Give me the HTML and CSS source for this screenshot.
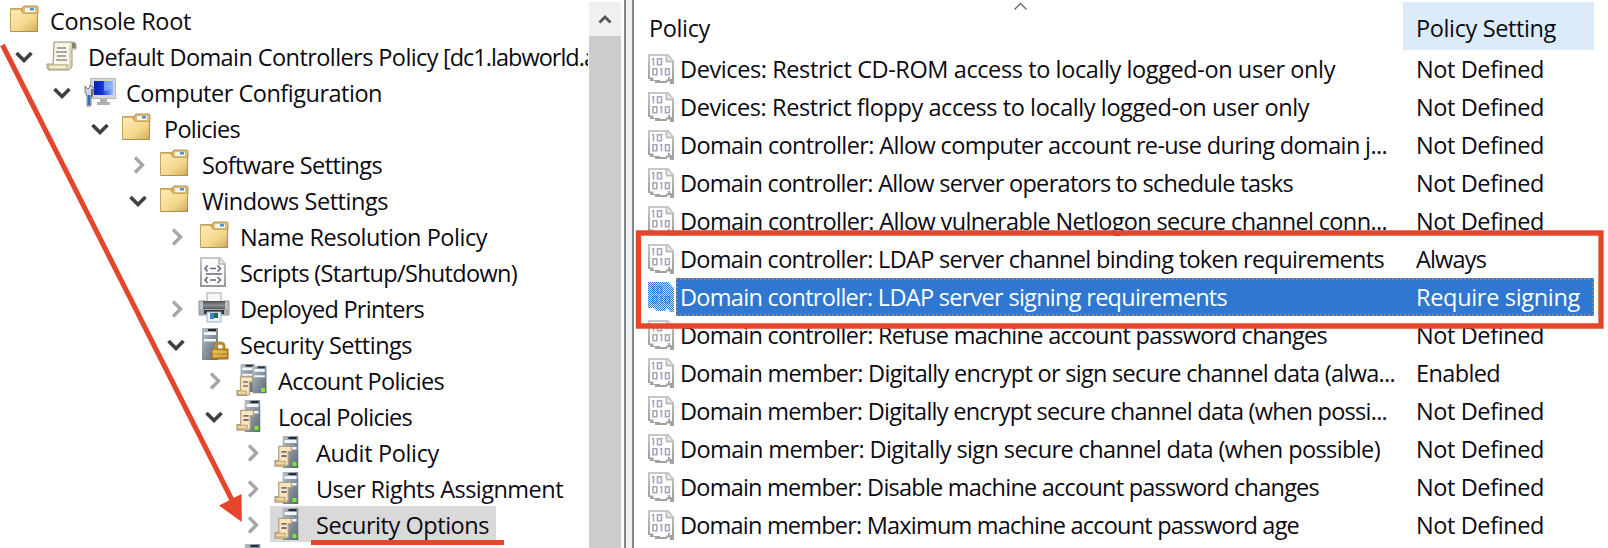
FILE: index.html
```
<!DOCTYPE html>
<html lang="en">
<head>
<meta charset="utf-8">
<title>Group Policy Management Editor</title>
<link rel="stylesheet" href="styles.css">
</head>
<body>
<svg width="0" height="0" class="defs">
  <defs>
    <linearGradient id="gFolder" x1="0" y1="0" x2="1" y2="1"><stop offset="0" stop-color="#fdeab5"/><stop offset=".6" stop-color="#f3d78c"/><stop offset="1" stop-color="#cfa95a"/></linearGradient>
    <linearGradient id="gServer" x1="0" y1="0" x2="1" y2="1"><stop offset="0" stop-color="#b4bec7"/><stop offset=".5" stop-color="#8593a0"/><stop offset="1" stop-color="#5d686b"/></linearGradient>
    <linearGradient id="gGold" x1="0" y1="0" x2="1" y2="1"><stop offset="0" stop-color="#e9bc50"/><stop offset="1" stop-color="#a8731a"/></linearGradient>
    <linearGradient id="gScreen" x1="0" y1="0" x2="1" y2="0"><stop offset="0" stop-color="#0a22a8"/><stop offset=".45" stop-color="#1237e0"/><stop offset="1" stop-color="#8fb7ff"/></linearGradient>
    <linearGradient id="gPrint" x1="0" y1="0" x2="0" y2="1"><stop offset="0" stop-color="#4c4f52"/><stop offset=".5" stop-color="#8b8f93"/><stop offset="1" stop-color="#44474a"/></linearGradient>
    <linearGradient id="gDoc" x1="0" y1="0" x2="0" y2="1"><stop offset="0" stop-color="#c8c8c8"/><stop offset="1" stop-color="#989898"/></linearGradient>
    <pattern id="dither" width="2" height="2" patternUnits="userSpaceOnUse"><path fill="#2f77d1" d="M0 0h1v1H0zM1 1h1v1H1z"/></pattern>
  </defs>
  <symbol id="folder" viewBox="0 0 32 32">
    <path d="M.5 4.500h13v4h14v19h-27z" fill="#d9b56a" stroke="#c4a15c"/>
    <path d="M12 8V4l2-2h13l1 1v7H12z" fill="#dcbc78" stroke="#b99653"/>
    <path d="M15 4h10v4H15z" fill="#fbf6e4"/><path d="M20 4h4v2.500h-4z" fill="#4d93dc"/>
    <path d="M1 6h9l3 4h14.500v17.500H1z" fill="url(#gFolder)"/>
    <path d="M1 27.500h27M27.500 10v17" stroke="#b18f48" fill="none"/>
  </symbol>
  <symbol id="scroll" viewBox="0 0 32 32">
    <path d="M8 2h20l2 2v5h-4v18l-3 3H3l-2-2v-4h6z" fill="#ded7bd" stroke="#9c9883"/>
    <path d="M9 3h15l-1 6v15H8z" fill="#fbf7e6"/>
    <path d="M26 3h3l1 5h-4z" fill="#8d836a"/>
    <path d="M2 25h19v4H3z" fill="#f5edcf" stroke="#b4aa82"/>
    <path d="M11 8h9M10 12h11M11 16h9M10 20h11" stroke="#8d8d92" stroke-width="1.500"/>
  </symbol>
  <symbol id="computer" viewBox="0 0 32 32">
    <path d="M6.500 2.500h25v20h-25z" fill="#d7d7d2" stroke="#b8b8b4"/>
    <path d="M10 5h19v14H10z" fill="url(#gScreen)"/>
    <path d="M20 5h9v8l-9 2z" fill="#8eb5ff" opacity=".75"/>
    <path d="M16 23h7v3h3v3H13v-3h3z" fill="#aeb0b0"/>
    <path d="M1 10l3 3 2-2V9l4 3-1 6-2 2v10H3V20l-2-4z" fill="#cfd3d6" stroke="#747b82"/>
    <path d="M5 19v10" stroke="#2e6fb5" stroke-width="2.500"/>
    <path d="M8 13v8" stroke="#555" stroke-width="1.500"/>
  </symbol>
  <symbol id="script" viewBox="0 0 32 32">
    <path d="M3 2h19l5 6v22H3z" fill="#fafafa" stroke="url(#gDoc)" stroke-width="2"/>
    <path d="M21 2v6h6" fill="#e4e4e4" stroke="#b5b5b5" stroke-width="1.500"/>
    <path d="M9.500 9.500L7 12.500l2.500 3M19.500 9.500l3 3-3 3M12 12.500h6M8 18h16M9.500 21L7 24l2.500 3M19.500 21l3 3-3 3M12 24h6" fill="none" stroke="#696580" stroke-width="1.600"/>
  </symbol>
  <symbol id="printer" viewBox="0 0 32 32">
    <path d="M9 1h14v10H9z" fill="#f7f7f7" stroke="#c3c3c3" stroke-width="1.500"/>
    <path d="M1 9h6v2h18V9h6v14H1z" fill="#bfc4c8" stroke="#8c9195"/>
    <path d="M5 9h22v9H5z" fill="url(#gPrint)"/>
    <path d="M1 17h30v6H1z" fill="#a4aaae"/><path d="M6 18h20v4H6z" fill="#33383d"/>
    <path d="M9 20h14v10H9z" fill="#e9f3fa" stroke="#9cb1c6"/>
    <path d="M12 21h4v6h-4z" fill="#3d86c4"/><path d="M16 21h4v5h-4z" fill="#21695c"/>
  </symbol>
  <symbol id="tower" viewBox="0 0 16 32">
    <path d="M0 0h16v32H0z" fill="url(#gServer)"/>
    <path d="M2 4h12v3H2zM2 11h12v2.500H2z" fill="#f2f6f8"/>
    <path d="M6 1h8v2H6z" fill="#222b34"/>
  </symbol>
  <symbol id="security" viewBox="0 0 32 32">
    <use href="#tower" x="4" y="0" width="16" height="32"/>
    <path d="M18 23v-5q0-3 4-3t4 3v5" fill="none" stroke="#b98b30" stroke-width="3"/>
    <path d="M14 21h16v10H14z" fill="url(#gGold)" stroke="#98691b"/>
    <path d="M15 24h14M15 28h14" stroke="#f2ce72"/>
  </symbol>
  <symbol id="paper" viewBox="0 0 18 20">
    <path d="M4.500 .8h12v5h-3v12.500l-2 1.200H1v-5h3.500z" fill="#f9e6bd" stroke="#b39f82" stroke-width="1.200"/>
    <path d="M1.500 15h9v3.500h-9z" fill="#f0d6a1" stroke="#b79e72"/>
    <path d="M7 6h5M7 10h5" stroke="#777184" stroke-width="1.700"/>
  </symbol>
  <symbol id="account" viewBox="0 0 32 32">
    <use href="#tower" x="4" y="0" width="15" height="28"/>
    <use href="#tower" x="16" y="1.500" width="15" height="28"/>
    <path d="M25 24h4v4h-4z" fill="#78ed2e"/>
    <use href="#paper" x="0" y="12" width="18" height="20"/>
  </symbol>
  <symbol id="policy" viewBox="0 0 32 32">
    <use href="#tower" x="8.500" y="0" width="16" height="32"/>
    <path d="M18.500 26h4v4h-4z" fill="#78ed2e"/>
    <use href="#paper" x="0" y="9" width="19" height="22"/>
  </symbol>
  <symbol id="digits" viewBox="0 0 26 30">
    <path d="M5.500 4v7.500M4 5h1.500M13.500 14v7.500M12 15h1.500M9.500 4.800h4v6h-4zM5 14.800h3.800v6H5zM17.500 14.800h3.800v6h-3.800z" fill="none" stroke-width="1.600"/>
  </symbol>
  <symbol id="binary" viewBox="0 0 26 30">
    <path d="M1 1h19l5 6v21H1z" fill="#fff"/>
    <path d="M1 25V1h19l5 6v22" fill="none" stroke="url(#gDoc)" stroke-width="2"/>
    <path d="M0 23.500h5.500V26H12v1h6v-1.500h2V23h2v2h4v5h-4v-2.500h-3V29H7v-2H2v-2H0z" fill="#a3a3a3"/>
    <path d="M18.500 1v6.500H25" fill="#eee" stroke="#bdbdbd" stroke-width="1.800"/>
    <use href="#digits" stroke="#a9a6ba" width="26" height="30"/>
  </symbol>
  <symbol id="ditherdoc" viewBox="0 0 26 30">
    <path d="M0 0h20l6 6v24h-4l-3-4-2 3H9l-3-3H0z" fill="#cfdcea"/>
    <use href="#digits" stroke="#8a94b8" width="26" height="30"/>
    <path d="M0 0h20l6 6v24h-4l-3-4-2 3H9l-3-3H0z" fill="url(#dither)"/>
  </symbol>
</svg>
<div class="editor">
  <nav class="tree" id="tree"></nav>
  <div class="scrollbar"><div class="scroll-up"><svg width="14" height="10" viewBox="0 0 14 10"><path d="M1.500 8.500L7 3l5.500 5.500" fill="none" stroke="#555" stroke-width="2.800"/></svg></div></div>
  <div class="splitter"></div>
  <main class="list">
    <div class="head"><div class="head-name"><span data-w="59">Policy</span></div><div class="head-setting"><span data-w="138">Policy Setting</span></div></div>
    <div id="rows"></div>
  </main>
  <svg class="marks" width="1608" height="548">
    <path d="M1014.500 9.500l6-6 6 6" fill="none" stroke="#666" stroke-width="1.300"/>
    <path d="M2.500 45L232 500" stroke="#e5452b" stroke-width="5"/>
    <path d="M219 505.500l22.500-11.500.3 28z" fill="#e5452b"/>
    <path d="M311 542.500h193" stroke="#e5452b" stroke-width="5"/>
    <path d="M638.500 233h962.500v93H638.500z" fill="none" stroke="#e5452b" stroke-width="5.300"/>
  </svg>
</div>
<script src="app.js"></script>
</body>
</html>
```
FILE: styles.css
```
body { margin: 0; background: #fff; }
.defs { position: absolute; }
.editor {
  position: relative;
  display: flex;
  width: 1608px;
  height: 548px;
  overflow: hidden;
  background: #fff;
  color: #0c0a12;
  font: 23.5px/36px "Open Sans", "Noto Sans", sans-serif;
  white-space: nowrap;
}
.tree { width: 588px; padding-top: 2px; overflow: hidden; box-sizing: border-box; flex: none; }
.node { display: flex; height: 36px; }
.depth0 { padding-left: 8px; }
.depth1 { padding-left: 8px; }
.depth2 { padding-left: 46px; }
.depth3 { padding-left: 84px; }
.depth4 { padding-left: 122px; }
.depth5 { padding-left: 160px; }
.depth6 { padding-left: 198px; }
.depth7 { padding-left: 236px; }
.twisty { width: 38px; flex: none; display: flex; align-items: center; }
.twisty svg { margin: 1px 0 0 7px; }
.depth0 .twisty { display: none; }
.item { display: flex; height: 36px; flex: none; }
.item > svg { width: 32px; height: 32px; margin: 2px 0 0; flex: none; }
.item > .shift { margin-left: 2px; margin-right: -2px; }
.label { display: flex; margin-left: 10px; padding-top: 1px; height: 35px; }
.label span + span { margin-left: 5px; }
.selected { background: #d9d9d9; margin-left: -4px; padding-left: 4px; padding-right: 7px; }
.scrollbar { width: 32px; margin: 2px 3px 0 1px; background: #cdcdcd; flex: none; }
.scroll-up { height: 34px; background: #f0f0f0; display: flex; align-items: center; justify-content: center; }
.splitter { width: 6px; border: solid #828790; border-width: 0 2px; background: #f0f0f0; flex: none; }
.list { flex: 1; min-width: 0; }
.head { display: flex; height: 50px; }
.head-name { width: 754px; padding: 10px 0 0 15px; flex: none; box-sizing: content-box; }
.head-setting { width: 178px; height: 38px; margin-top: 2px; padding: 8px 0 2px 13px; background: #dcebf8; }
.row { display: flex; height: 38px; padding-left: 14px; }
.row > svg { width: 26px; height: 30px; margin-top: 4px; flex: none; }
.cells { display: flex; margin-left: 2px; width: 918px; box-sizing: border-box; padding: 1px 0 0 4px; height: 38px; flex: none; }
.name { width: 736px; flex: none; }
.picked .cells { background: #2f77d1; color: #fff; outline: 2px dotted #8d8187; outline-offset: -2px; }
.marks { position: absolute; left: 0; top: 0; }
```
FILE: app.js
```
const nodes = [
  [0, '', 'folder', 'Console Root', 139],
  [1, 'open', 'scroll', 'Default Domain Controllers Policy', 348, '[dc1.labworld.a', 151],
  [2, 'open', 'computer', 'Computer Configuration', 254],
  [3, 'open', 'folder', 'Policies', 74],
  [4, 'closed', 'folder', 'Software Settings', 178],
  [4, 'open', 'folder', 'Windows Settings', 184],
  [5, 'closed', 'folder', 'Name Resolution Policy', 245],
  [5, '', 'script', 'Scripts (Startup/Shutdown)', 275],
  [5, 'closed', 'printer', 'Deployed Printers', 182],
  [5, 'open', 'security', 'Security Settings', 170],
  [6, 'closed', 'account', 'Account Policies', 164],
  [6, 'open', 'policy', 'Local Policies', 132],
  [7, 'closed', 'policy', 'Audit Policy', 121],
  [7, 'closed', 'policy', 'User Rights Assignment', 245],
  [7, 'closed', 'policy', 'Security Options', 171],
  [6, '', 'policy', '', 0]
];
const settings = { 'Not Defined': 126, 'Always': 68, 'Require signing': 162, 'Enabled': 82 };
const rows = [
  ['Devices: Restrict CD-ROM access to locally logged-on user only', 653, 'Not Defined'],
  ['Devices: Restrict floppy access to locally logged-on user only', 627, 'Not Defined'],
  ['Domain controller: Allow computer account re-use during domain j...', 705, 'Not Defined'],
  ['Domain controller: Allow server operators to schedule tasks', 611, 'Not Defined'],
  ['Domain controller: Allow vulnerable Netlogon secure channel conn...', 705, 'Not Defined'],
  ['Domain controller: LDAP server channel binding token requirements', 702, 'Always'],
  ['Domain controller: LDAP server signing requirements', 545, 'Require signing'],
  ['Domain controller: Refuse machine account password changes', 645, 'Not Defined'],
  ['Domain member: Digitally encrypt or sign secure channel data (alwa...', 713, 'Enabled'],
  ['Domain member: Digitally encrypt secure channel data (when possi...', 705, 'Not Defined'],
  ['Domain member: Digitally sign secure channel data (when possible)', 698, 'Not Defined'],
  ['Domain member: Disable machine account password changes', 637, 'Not Defined'],
  ['Domain member: Maximum machine account password age', 617, 'Not Defined']
];
const arrows = {
  open: '<svg width="18" height="12" viewBox="0 0 18 12"><path d="M1.500 2L9 9.500 16.500 2" fill="none" stroke="#404040" stroke-width="3.600"/></svg>',
  closed: '<svg width="18" height="18" viewBox="0 0 18 18"><path d="M6 1.500L13.500 9 6 16.500" fill="none" stroke="#a6a6a6" stroke-width="3.400"/></svg>',
  '': ''
};
const icon = (id, cls = '') => `<svg class="${cls}"><use href="#${id}"/></svg>`;
const fitted = (text, w) => text ? `<span data-w="${w}">${text}</span>` : '';

document.getElementById('tree').innerHTML = nodes.map(([d, state, ic, text, w, more, moreW]) =>
  `<div class="node depth${d}"><div class="twisty">${arrows[state]}</div>` +
  `<div class="item${text === 'Security Options' ? ' selected' : ''}">` +
  icon(ic, ic === 'folder' && (d === 0 || d === 5) ? 'shift' : '') +
  `<div class="label">${fitted(text, w)}${fitted(more, moreW)}</div></div></div>`).join('');

document.getElementById('rows').innerHTML = rows.map(([text, w, s], i) =>
  `<div class="row${i === 6 ? ' picked' : ''}">${icon(i === 6 ? 'ditherdoc' : 'binary')}` +
  `<div class="cells"><div class="name">${fitted(text, w)}</div>` +
  `<div>${fitted(s, settings[s])}</div></div></div>`).join('');

document.querySelectorAll('[data-w]').forEach(el => {
  const gap = (Number(el.dataset.w) + 2 - el.getBoundingClientRect().width) / el.textContent.length;
  el.style.letterSpacing = gap.toFixed(3) + 'px';
});
```
